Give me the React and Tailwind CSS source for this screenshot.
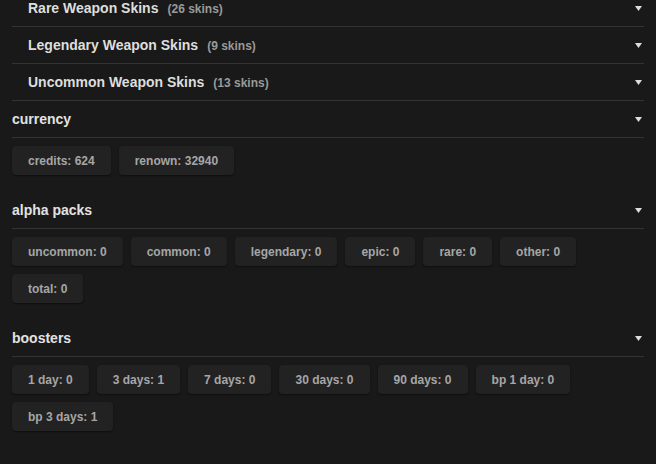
import React from "react";

const skinRows = [
  { name: "Rare Weapon Skins", count: 26 },
  { name: "Legendary Weapon Skins", count: 9 },
  { name: "Uncommon Weapon Skins", count: 13 },
];

const sections = [
  {
    title: "currency",
    items: ["credits: 624", "renown: 32940"],
  },
  {
    title: "alpha packs",
    items: [
      "uncommon: 0",
      "common: 0",
      "legendary: 0",
      "epic: 0",
      "rare: 0",
      "other: 0",
      "total: 0",
    ],
  },
  {
    title: "boosters",
    items: [
      "1 day: 0",
      "3 days: 1",
      "7 days: 0",
      "30 days: 0",
      "90 days: 0",
      "bp 1 day: 0",
      "bp 3 days: 1",
    ],
  },
];

// small caret used on every collapsible header
const Caret = () => (
  <svg width="7" height="5" viewBox="0 0 7 5" className="shrink-0">
    <path d="M0 0 H7 L3.5 5 Z" fill="#dcdcdc" />
  </svg>
);

const Chip = ({ label }) => (
  <div className="h-[29px] px-4 flex items-center rounded bg-[#222222] shadow-[0_1px_2px_rgba(0,0,0,0.45)] text-xs font-bold text-[#a6a6a6]">
    {label}
  </div>
);

const Section = ({ title, items, first }) => (
  <div className={first ? "" : "mt-[17px]"}>
    <div className="h-[37px] flex items-center justify-between pr-[2px] border-b border-[#333333]">
      <span className="text-sm font-bold text-[#e2e2e2]">{title}</span>
      <Caret />
    </div>
    <div className="mt-2 flex flex-wrap gap-2">
      {items.map((item, i) => (
        <Chip key={i} label={item} />
      ))}
    </div>
  </div>
);

export default function App() {
  return (
    <div
      className="min-h-screen bg-[#191919] px-3 overflow-hidden"
      style={{ fontFamily: '"Liberation Sans", Arial, sans-serif' }}
    >
      <div className="-mt-[10px]">
        {skinRows.map((row) => (
          <div
            key={row.name}
            className="h-[37px] flex items-center justify-between pl-4 pr-[2px] border-b border-[#333333]"
          >
            <div className="flex items-baseline gap-[9px]">
              <span className="text-sm font-bold text-[#dedede]">{row.name}</span>
              <span className="text-xs font-bold text-[#9a9a9a]">({row.count} skins)</span>
            </div>
            <Caret />
          </div>
        ))}
      </div>
      {sections.map((s, i) => (
        <Section key={s.title} title={s.title} items={s.items} first={i === 0} />
      ))}
    </div>
  );
}
